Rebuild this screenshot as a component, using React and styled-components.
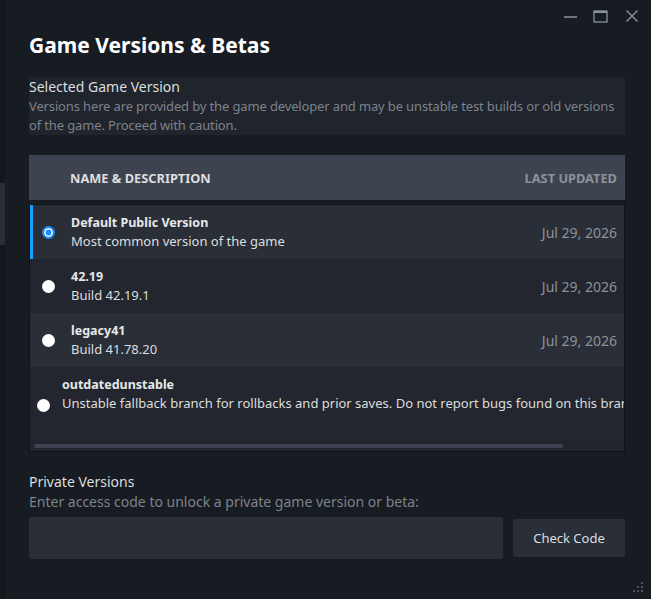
import React from 'react'
import styled, { createGlobalStyle } from 'styled-components'

const GlobalStyle = createGlobalStyle`
    html, body {
        margin: 0;
        padding: 0;
        background: #171b22;
        font-family: "Noto Sans", "Open Sans", Arial, sans-serif;
        color: #dcdedf;
    }
    * { box-sizing: border-box; }
`

const Frame = styled.div`
    display: flex;
    width: 651px;
    height: 599px;
    overflow: hidden;
    position: relative;
    background: #171b22;
`

// strip of the window behind
const Behind = styled.div`
    width: 5px;
    flex: none;
    background: #13161b;
    padding-top: 183px;
`

const BehindMark = styled.div`
    height: 62px;
    background: #2a2f37;
`

const Main = styled.div`
    flex: 1;
    min-width: 0;
    display: flex;
    flex-direction: column;
    padding: 0 26px 0 24px;
`

const TitleBar = styled.div`
    height: 32px;
    display: flex;
    justify-content: flex-end;
    align-items: center;
    margin-right: -26px;
    padding-right: 4px;
`

const WinButton = styled.div`
    width: 31px;
    height: 32px;
    display: flex;
    align-items: center;
    justify-content: center;
    color: #8b929a;
`

const Title = styled.h1`
    margin: 0;
    font-size: 21px;
    line-height: 26px;
    font-weight: 700;
    color: #ffffff;
`

const Section = styled.div`
    margin-top: 19px;
    background: #20242c;
`

const SectionHeading = styled.div`
    font-size: 14px;
    line-height: 20px;
    color: #dcdedf;
`

const SectionText = styled.div`
    font-size: 13px;
    line-height: 19px;
    letter-spacing: -0.14px;
    color: #7d838b;
`

const TableHead = styled.div`
    margin-top: 20px;
    height: 45px;
    background: #3d4450;
    display: flex;
    align-items: center;
    padding: 0 8px 0 41px;
    font-size: 12.8px;
    font-weight: 700;
    text-transform: uppercase;
`

const HeadCell = styled.div`
    flex: ${p => (p.grow ? 1 : 'none')};
    color: ${p => (p.muted ? '#8b929a' : '#dcdedf')};
`

const TableBody = styled.div`
    margin-top: 4px;
    border: 1px solid #0f1217;
    background: #22252d;
    overflow: hidden;
`

const Row = styled.label`
    display: flex;
    align-items: center;
    height: ${p => (p.tall ? '73px' : '54px')};
    background: ${p => (p.alt ? '#2a2e37' : '#23262e')};
    border-left: 3px solid ${p => (p.active ? '#1a9fff' : 'transparent')};
    padding-right: 7px;
    white-space: nowrap;
    overflow: hidden;
`

const RadioCell = styled.div`
    width: ${p => (p.narrow ? '29px' : '38px')};
    flex: none;
    display: flex;
    padding-left: ${p => (p.narrow ? '4px' : '9px')};
    padding-top: ${p => (p.narrow ? '3px' : '0')};
    align-self: center;
`

const Radio = styled.input.attrs({ type: 'radio', name: 'branch' })`
    appearance: none;
    margin: 0;
    width: 13px;
    height: 13px;
    border-radius: 50%;
    background: #ffffff;

    &:checked {
        background: #1a8cff;
        border: 2px solid #1a8cff;
        box-shadow: inset 0 0 0 1.6px #ffffff;
    }
`

const Info = styled.div`
    flex: 1;
    display: flex;
    flex-direction: column;
    align-self: ${p => (p.top ? 'flex-start' : 'center')};
    padding-top: ${p => (p.top ? '8px' : '0')};
    min-width: 0;
`

const BranchName = styled.div`
    font-size: 12.5px;
    line-height: 19px;
    font-weight: 700;
    color: #e6e8ea;
`

const BranchDesc = styled.div`
    font-size: 13px;
    line-height: 19px;
    color: #dcdedf;
`

const DateCell = styled.div`
    font-size: 14px;
    color: #8b929a;
    flex: none;
`

const ScrollTrack = styled.div`
    height: 11px;
    padding: 4px 0 0 4px;
`

const ScrollThumb = styled.div`
    height: 4px;
    width: 529px;
    border-radius: 2px;
    background: #3d4350;
`

const PrivateHeading = styled.div`
    margin-top: 20px;
    font-size: 14px;
    line-height: 20px;
    color: #dcdedf;
`

const PrivateText = styled.div`
    font-size: 14px;
    line-height: 20px;
    color: #7d838b;
`

const CodeRow = styled.div`
    margin-top: 5px;
    display: flex;
    align-items: center;
    gap: 10px;
`

const CodeInput = styled.input`
    flex: 1;
    min-width: 0;
    height: 42px;
    border: none;
    border-radius: 3px;
    background: #2a2e37;
    color: #dcdedf;
    font: inherit;
    padding: 0 10px;
    outline: none;
`

const CheckButton = styled.button`
    width: 112px;
    flex: none;
    height: 38px;
    border: none;
    border-radius: 2px;
    background: #2a2e37;
    color: #dcdedf;
    font-family: inherit;
    font-size: 13px;
`

const Grip = styled.svg`
    position: absolute;
    right: 6px;
    bottom: 4px;
`

const branches = [
    { name: 'Default Public Version', desc: 'Most common version of the game', date: 'Jul 29, 2026', active: true },
    { name: '42.19', desc: 'Build 42.19.1', date: 'Jul 29, 2026' },
    { name: 'legacy41', desc: 'Build 41.78.20', date: 'Jul 29, 2026' },
]

const App = () => (
    <Frame>
        <GlobalStyle />
        <Behind>
            <BehindMark />
        </Behind>
        <Main>
            <TitleBar>
                <WinButton>
                    <svg width="14" height="14" viewBox="0 0 14 14">
                        <path d="M1 8h13" stroke="currentColor" strokeWidth="1.5" />
                    </svg>
                </WinButton>
                <WinButton>
                    <svg width="15" height="14" viewBox="0 0 15 14">
                        <rect x="1" y="2" width="13" height="11" fill="none" stroke="currentColor" strokeWidth="1.3" />
                        <path d="M1 3h13" stroke="currentColor" strokeWidth="2" />
                    </svg>
                </WinButton>
                <WinButton>
                    <svg width="14" height="14" viewBox="0 0 14 14">
                        <path d="M1.5 1.5l11 11M12.5 1.5l-11 11" stroke="currentColor" strokeWidth="1.4" />
                    </svg>
                </WinButton>
            </TitleBar>
            <Title>Game Versions &amp; Betas</Title>
            <Section>
                <SectionHeading>Selected Game Version</SectionHeading>
                <SectionText>
                    Versions here are provided by the game developer and may be unstable test builds or old versions of the game. Proceed with caution.
                </SectionText>
            </Section>
            <TableHead>
                <HeadCell grow>Name &amp; Description</HeadCell>
                <HeadCell muted>Last Updated</HeadCell>
            </TableHead>
            <TableBody>
                {branches.map((b, i) => (
                    <Row key={b.name} alt={i % 2 === 0} active={b.active}>
                        <RadioCell>
                            <Radio defaultChecked={b.active} />
                        </RadioCell>
                        <Info>
                            <BranchName>{b.name}</BranchName>
                            <BranchDesc>{b.desc}</BranchDesc>
                        </Info>
                        <DateCell>{b.date}</DateCell>
                    </Row>
                ))}
                <Row tall>
                    <RadioCell narrow>
                        <Radio />
                    </RadioCell>
                    <Info top>
                        <BranchName>outdatedunstable</BranchName>
                        <BranchDesc>
                            Unstable fallback branch for rollbacks and prior saves. Do not report bugs found on this branch.
                        </BranchDesc>
                    </Info>
                </Row>
                <ScrollTrack>
                    <ScrollThumb />
                </ScrollTrack>
            </TableBody>
            <PrivateHeading>Private Versions</PrivateHeading>
            <PrivateText>Enter access code to unlock a private game version or beta:</PrivateText>
            <CodeRow>
                <CodeInput />
                <CheckButton>Check Code</CheckButton>
            </CodeRow>
        </Main>
        <Grip width="14" height="14" viewBox="0 0 14 14" fill="#4e5562">
            <rect x="10" y="1" width="2" height="2" />
            <rect x="6" y="5" width="2" height="2" />
            <rect x="10" y="5" width="2" height="2" />
            <rect x="2" y="9" width="2" height="2" />
            <rect x="6" y="9" width="2" height="2" />
            <rect x="10" y="9" width="2" height="2" />
        </Grip>
    </Frame>
)

export default App
